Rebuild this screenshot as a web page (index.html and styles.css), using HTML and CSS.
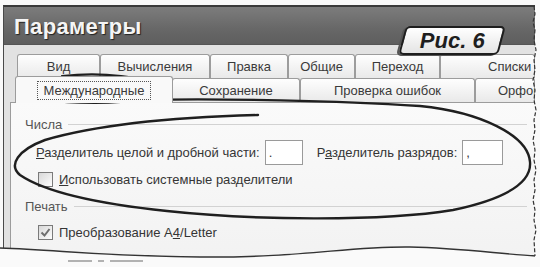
FILE: index.html
```html
<!DOCTYPE html>
<html lang="ru">
<head>
  <meta charset="UTF-8">
  <meta name="viewport" content="width=device-width, initial-scale=1.0">
  <title>Параметры</title>
  <link rel="stylesheet" href="styles.css">
</head>
<body>
  <div class="page">
    <div class="window">
      <div class="titlebar"><span class="title">Параметры</span></div>
      <div class="client">
        <div class="tabs">
          <div class="tab-row back">
            <div class="tab">Вид</div>
            <div class="tab">Вычисления</div>
            <div class="tab">Правка</div>
            <div class="tab">Общие</div>
            <div class="tab">Переход</div>
            <div class="tab cut lists">Списки</div>
          </div>
          <div class="tab-row front">
            <div class="tab active"><span class="focus">Международные</span></div>
            <div class="tab">Сохранение</div>
            <div class="tab">Проверка ошибок</div>
            <div class="tab cut spell">Орфография</div>
          </div>
        </div>
        <div class="panel">
          <div class="group">
            <div class="group-head">Числа</div>
            <div class="group-body">
              <div class="field-row">
                <span><u>Р</u>азделитель целой и дробной части:</span>
                <span class="field">.</span>
                <span class="label2">Р<u>а</u>зделитель разрядов:</span>
                <span class="field wide">,</span>
              </div>
              <div class="check-row">
                <span class="box"></span>
                <span><u>И</u>спользовать системные разделители</span>
              </div>
            </div>
          </div>
          <div class="group print">
            <div class="group-head">Печать</div>
            <div class="group-body">
              <div class="check-row">
                <span class="box">
                  <svg width="13" height="13" viewBox="0 0 13 13"><path d="M2.5 6.5 L5.5 9.5 L10.5 3" fill="none" stroke="#6e6e6e" stroke-width="2"/></svg>
                </span>
                <span>Преобразование A<u>4</u>/Letter</span>
              </div>
            </div>
          </div>
        </div>
      </div>
    </div>

    <!-- hand drawn marks and torn paper edge -->
    <svg class="marks" width="540" height="267" viewBox="0 0 540 267">
      <path d="M62 76 C100 72 150 76 157 88 C162 98 130 103 95 103 C55 103 28 99 28 91 C28 84 45 80 78 79"
            fill="none" stroke="#1f1f1f" stroke-width="2.2" stroke-linecap="round"/>
      <path d="M143 100 C220 98 340 101 420 106 C480 112 528 135 530 162 C532 185 500 200 453 210 C380 222 250 220 167 211 C100 204 45 192 20 175 C8 165 18 150 45 140 C100 124 180 117 258 115"
            fill="none" stroke="#1f1f1f" stroke-width="2.4" stroke-linecap="round"/>
      <path d="M0 248 C60 250 100 256 200 257 C300 258 350 246 410 247 C460 248 500 254 540 256 L540 267 L0 267 Z"
            fill="#fafafa"/>
      <path d="M0 248 C60 250 100 256 200 257 C300 258 350 246 410 247 C460 248 500 254 536 256"
            fill="none" stroke="#333" stroke-width="1.4"/>
      <rect x="535" y="0" width="5" height="267" fill="#fafafa"/>
      <path d="M534 6 L535 14 L533 22 L535 30 L534 40 L536 50 L534 60 L535 70 L533 80 L535 90 L534 100 L536 110 L534 120 L535 130 L533 140 L535 150 L534 160 L536 170 L534 180 L535 190 L533 200 L535 210 L534 220 L536 230 L534 240 L535 256"
            fill="none" stroke="#333" stroke-width="1.2" stroke-dasharray="4 2"/>
      <path d="M68 261 H92 M98 261 H104 M110 261 H143" stroke="#9a9a9a" stroke-width="1.5"/>
    </svg>

    <div class="badge"><span>Рис. 6</span></div>
  </div>
</body>
</html>
```

FILE: styles.css
```css
* {
  box-sizing: border-box;
}
body {
  margin: 0;
  background: #fafafa;
  font-family: "Liberation Sans", Arial, sans-serif;
  font-size: 13px;
  color: #353535;
}
.page {
  position: relative;
  width: 540px;
  height: 267px;
  overflow: hidden;
}
.window {
  margin: 5px 0 0 3px;
  width: 532px;
  height: 262px;
  overflow: hidden;
  border-top: 2px solid #3a3a3a;
  border-left: 1px solid #4a4a4a;
  background: #e2e2e2;
  display: flex;
  flex-direction: column;
}
.titlebar {
  height: 38px;
  padding: 3px 0 0 10px;
  display: flex;
  align-items: center;
  background: linear-gradient(#7c7c7c, #676767 60%, #5e5e5e);
  border-bottom: 1px solid #555;
}
.title {
  font-size: 22px;
  font-weight: bold;
  color: #f5f5f5;
  text-shadow: 1px 1px 1px #222;
  letter-spacing: 0.3px;
}
.client {
  flex: 1;
  padding: 9px 0 0 6px;
  display: flex;
  flex-direction: column;
}
.tabs {
  padding-left: 7px;
}
.tab-row {
  display: grid;
  height: 24px;
}
.tab-row.back {
  grid-template-columns: 83px 110px 78px 67px 85px 1fr;
}
.tab-row.front {
  grid-template-columns: 155px 128px 175px 1fr;
}
.tab {
  height: 24px;
  display: flex;
  align-items: center;
  justify-content: center;
  white-space: nowrap;
  overflow: hidden;
  border: 1px solid #9c9c9c;
  border-bottom: none;
  border-radius: 3px 3px 0 0;
  background: linear-gradient(#fefefe, #e9e9e9);
  color: #3a3a3a;
}
.tab.cut {
  justify-content: flex-start;
}
.tab.lists {
  padding-left: 47px;
}
.tab.spell {
  padding-left: 22px;
}
.tab.active {
  position: relative;
  z-index: 1;
  height: 27px;
  margin: -2px -1px 0 -2px;
  background: #f9f9f9;
}
.focus {
  border: 1px dotted #555;
  padding: 1px 6px;
}
.panel {
  flex: 1;
  border: 1px solid #9c9c9c;
  border-right: none;
  background: linear-gradient(#fafafa, #f2f2f2);
  padding: 14px 0 0 14px;
}
.group-head {
  display: flex;
  align-items: center;
  gap: 6px;
  height: 14px;
  color: #555;
}
.group-head::after {
  content: "";
  flex: 1;
  height: 1px;
  background: #d2d2d2;
  margin-right: 8px;
}
.group-body {
  padding-left: 11px;
}
.field-row {
  display: flex;
  align-items: center;
  height: 25px;
  margin-top: 9px;
}
.field {
  width: 38px;
  height: 25px;
  margin-left: 5px;
  padding-left: 3px;
  line-height: 23px;
  border: 1px solid #9a9a9a;
  background: #fff;
}
.field.wide {
  width: 41px;
}
.label2 {
  margin-left: 14px;
}
.check-row {
  display: flex;
  align-items: center;
  gap: 6px;
  height: 17px;
  margin-top: 6px;
  padding-left: 2px;
}
.box {
  width: 15px;
  height: 15px;
  border: 1px solid #7a7a7a;
  background: linear-gradient(135deg, #d8d8d8, #fdfdfd);
  display: flex;
  align-items: center;
  justify-content: center;
}
.print {
  margin-top: 11px;
}
.print .check-row {
  margin-top: 11px;
}
.marks {
  position: absolute;
  left: 0;
  top: 0;
  pointer-events: none;
}
.badge {
  position: absolute;
  left: 402px;
  top: 26px;
  width: 100px;
  height: 29px;
  transform: skewX(-15deg);
  border: 2px solid #1e1e1e;
  border-radius: 5px;
  background: linear-gradient(#ffffff, #e4e4e4);
  box-shadow: -2px 1px 0 #555;
  display: flex;
  align-items: center;
  justify-content: center;
}
.badge span {
  transform: skewX(15deg);
  font-size: 22px;
  font-style: italic;
  font-weight: bold;
  color: #1e1e1e;
}
```
